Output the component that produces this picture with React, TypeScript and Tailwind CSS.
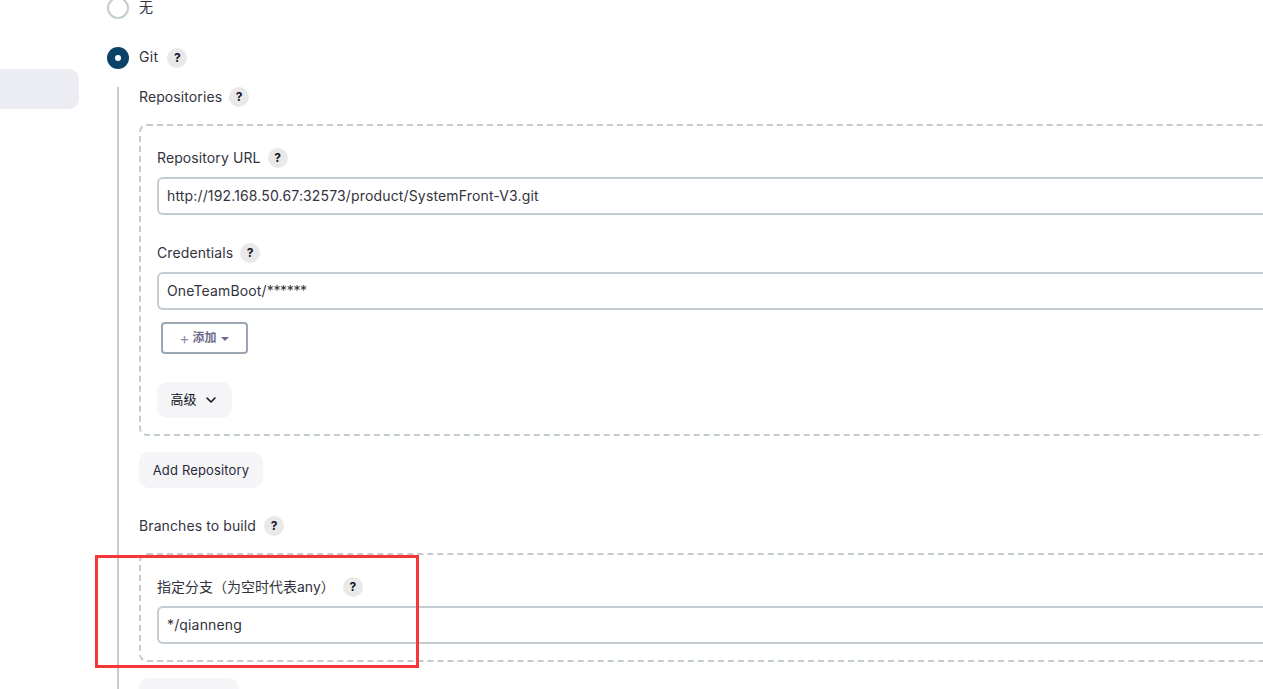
const font = "font-['Inter','Noto_Sans_CJK_SC',sans-serif]";

function Help() {
  return (
    <span className="flex h-5 w-5 shrink-0 items-center justify-center rounded-full bg-[#e9e9ea] text-[12px] font-bold leading-none tracking-normal text-[#14141f]">
      ?
    </span>
  );
}

function FieldLabel({ text, tight = false }: { text: string; tight?: boolean }) {
  return (
    <div className={`flex h-5 items-center ${tight ? "gap-[7px]" : "gap-2"} text-[14px] leading-5 tracking-[0.1px] text-[#333340]`}>
      <span>{text}</span>
      <Help />
    </div>
  );
}

function TextInput({ value, suffix }: { value: string; suffix?: string }) {
  return (
    <div className="flex h-[38px] items-center rounded-l-md rounded-r-none border-2 border-r-0 border-[#c3ccd1] bg-white pb-[2px] pl-2 text-[14px] tracking-[0.15px] text-[#333340]">
      {value}
      {suffix ? <span className="tracking-[-0.35px]">{suffix}</span> : null}
    </div>
  );
}

export default function App() {
  return (
    <div className={`relative flex h-[689px] w-[1263px] overflow-hidden bg-white ${font}`}>
      <aside className="w-[79px] shrink-0 pt-[69px]">
        <div className="h-10 rounded-r-[10px] bg-[#ecedf2]" />
      </aside>

      <main className="-mt-[3px] min-w-0 flex-1 pl-7">
        <div className="flex h-[22px] items-center gap-[10px] text-[14px] text-[#333340]">
          <span className="h-[22px] w-[22px] rounded-full border-2 border-[#c3ccd1] bg-white" />
          <span className="-mt-[4px]">无</span>
        </div>

        <div className="mt-[28px] flex h-[22px] items-center gap-[10px] text-[14px] text-[#333340]">
          <span className="flex h-[22px] w-[22px] items-center justify-center rounded-full bg-[#0b4268]">
            <span className="h-[6px] w-[6px] rounded-full bg-white" />
          </span>
          <span className="flex items-center gap-[9px] tracking-[0.3px]">
            <span className="-mt-[4px]">Git</span>
            <Help />
          </span>
        </div>

        <div className="ml-[10px] mt-[18px] border-l-2 border-[#c3ccd1] pl-5">
          <FieldLabel text="Repositories" tight />

          <div className="mt-[17px] h-[312px] rounded-l-lg border-2 border-r-0 border-dashed border-[#c3ccd1] pl-4 pt-[22px]">
            <FieldLabel text="Repository URL" tight />
            <div className="mt-[9px]">
              <TextInput value="http://192.168.50.67:32573/product/SystemFront-V3.git" />
            </div>
            <div className="mt-[28px]">
              <FieldLabel text="Credentials" tight />
            </div>
            <div className="mt-[9px]">
              <TextInput value="OneTeamBoot/" suffix="******" />
            </div>
            <div className="ml-1 mt-3 flex h-8 w-[87px] items-center justify-center gap-[5px] rounded border-2 border-[#9aa6b2] text-[12px] font-semibold text-[#6d6b8a]">
              <span className="flex items-center gap-[3px]">
                <span className="text-[15px] font-normal leading-none text-[#8f8fa5]">+</span>
                <span>添加</span>
              </span>
              <span className="mt-[1px] h-0 w-0 border-x-[4px] border-t-[4px] border-x-transparent border-t-[#6d6b8a]" />
            </div>
            <div className="mt-7 flex h-9 w-[75px] items-center justify-center gap-2 rounded-[10px] bg-[#f5f5f8] pr-[2px] text-[13px] text-[#14141f]">
              <span>高级</span>
              <svg width="12" height="12" viewBox="0 0 12 12" fill="none" stroke="#14141f" strokeWidth="1.6" strokeLinecap="round" strokeLinejoin="round">
                <path d="M2 4l4 4 4-4" />
              </svg>
            </div>
          </div>

          <div className="mt-4 flex h-9 w-[124px] items-center justify-center rounded-[10px] bg-[#f5f5f8] pt-[2px] text-[13px] tracking-[0.15px] text-[#2b2b38]">
            Add Repository
          </div>

          <div className="mt-[28px]">
            <FieldLabel text="Branches to build" />
          </div>

          <div className="mt-[17px] h-[109px] rounded-l-lg border-2 border-r-0 border-dashed border-[#c3ccd1] pl-4 pt-[22px]">
            <div className="flex h-5 items-center gap-[8px] text-[14px] leading-5 text-[#333340]">
              <span>指定分支（为空时代表any）</span>
              <Help />
            </div>
            <div className="mt-[9px]">
              <TextInput value="*/qianneng" />
            </div>
          </div>

          <div className="mt-4 h-9 w-[100px] rounded-[10px] bg-[#f5f5f8]" />
        </div>
      </main>

      <div className="pointer-events-none absolute left-[95px] top-[555px] h-[113px] w-[324px] border-[3px] border-[#f73737]" />
    </div>
  );
}
